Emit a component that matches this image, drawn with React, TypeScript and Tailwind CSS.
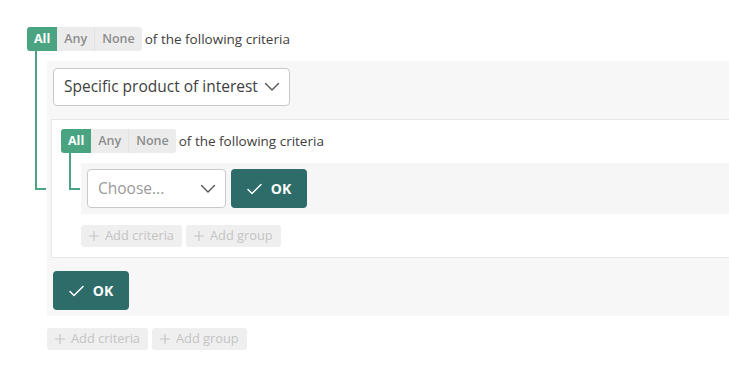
import React from 'react'

const font = { fontFamily: '"Open Sans", Lato, sans-serif' }

function Chevron() {
  return (
    <svg width="16" height="10" viewBox="0 0 16 10" fill="none">
      <path d="M1.5 1.5 L8 8 L14.5 1.5" stroke="#555" strokeWidth="1.4" strokeLinecap="round" strokeLinejoin="round" />
    </svg>
  )
}

function Check() {
  return (
    <svg width="15" height="12" viewBox="0 0 15 12" fill="none">
      <path d="M1 6.5 L5 10.5 L14 1.5" stroke="#fff" strokeWidth="1.5" strokeLinecap="round" strokeLinejoin="round" />
    </svg>
  )
}

function Plus() {
  return (
    <svg width="10" height="10" viewBox="0 0 10 10" fill="none">
      <path d="M5 0.5 V9.5 M0.5 5 H9.5" stroke="#c6c6c6" strokeWidth="1.2" strokeLinecap="round" />
    </svg>
  )
}

function Pills() {
  return (
    <div className="flex items-center h-6">
      <div className="flex h-6 rounded-[3px] overflow-hidden text-[12.5px] font-semibold">
        <span className="flex items-center px-[7px] bg-[#4aa481] text-white font-bold">All</span>
        <span className="flex items-center px-[7px] bg-[#ececec] text-[#8d8d8d] border-r border-[#e2e2e2]">Any</span>
        <span className="flex items-center px-[7px] bg-[#ececec] text-[#8d8d8d]">None</span>
      </div>
      <span className="ml-[3px] text-[13.5px] text-[#404040]">of the following criteria</span>
    </div>
  )
}

function Connector() {
  return (
    <div className="w-5 shrink-0 flex flex-col">
      <div className="h-[10px] ml-2 w-[11px] border-l-2 border-[#4aa481]" />
      <div className="flex-1 flex flex-col">
        <div className="flex-1 ml-2 w-[11px] border-l-2 border-b-2 border-[#4aa481]" />
        <div className="flex-1" />
      </div>
    </div>
  )
}

function AddButtons() {
  return (
    <div className="flex gap-1">
      <button className="flex items-center gap-[6px] h-[22px] px-2 rounded-[3px] bg-[#efefef] text-[12.8px] text-[#c4c4c4]">
        <Plus />
        Add criteria
      </button>
      <button className="flex items-center gap-[6px] h-[22px] px-2 rounded-[3px] bg-[#efefef] text-[12.8px] text-[#c4c4c4]">
        <Plus />
        Add group
      </button>
    </div>
  )
}

function OkButton() {
  return (
    <button className="flex items-center justify-center gap-[9px] w-[76px] h-[39px] rounded-[4px] bg-[#2e6c69] text-white text-[14px] font-bold">
      <Check />
      OK
    </button>
  )
}

export default function App() {
  return (
    <div className="w-[729px] h-[379px] bg-white overflow-hidden pt-[27px] pl-[27px]" style={font}>
      <Pills />
      <div className="flex">
        <Connector />
        <div className="flex-1 mt-[10px] bg-[#f7f7f7] pt-[7px] pb-[6px]">
          <div className="pl-[6px]">
            <button className="flex items-center justify-between w-[237px] h-[38px] pl-[10px] pr-[9px] bg-white border border-[#c9c9c9] rounded-[4px] text-[15.5px] text-[#404040]">
              Specific product of interest
              <Chevron />
            </button>
          </div>
          <div className="mt-[13px] ml-1 bg-white border-y border-l border-[#e6e6e6] pt-[9px] pl-[9px] pb-[10px]">
            <Pills />
            <div className="flex">
              <Connector />
              <div className="flex-1 mt-[10px] bg-[#f6f6f6] p-[6px] flex gap-[5px]">
                <button className="flex items-center justify-between w-[139px] h-[39px] pl-[10px] pr-[9px] bg-white border border-[#c9c9c9] rounded-[4px] text-[15.5px] text-[#9a9a9a]">
                  Choose...
                  <Chevron />
                </button>
                <OkButton />
              </div>
            </div>
            <div className="ml-5 mt-[11px]">
              <AddButtons />
            </div>
          </div>
          <div className="pl-[6px] mt-[13px]">
            <OkButton />
          </div>
        </div>
      </div>
      <div className="ml-5 mt-3">
        <AddButtons />
      </div>
    </div>
  )
}
